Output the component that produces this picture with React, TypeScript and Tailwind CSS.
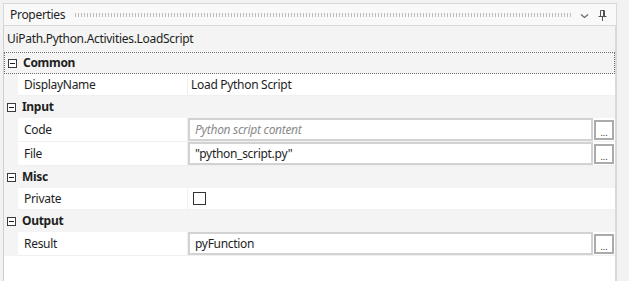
import React from "react";

const font = "font-['Noto_Sans',sans-serif] tracking-[-0.3px]";

const Toggle = () => (
  <span className="w-[9px] h-[9px] border border-[#3c3c3c] bg-white flex items-center justify-center shrink-0">
    <span className="w-[5px] h-px bg-[#1e1e1e]" />
  </span>
);

const Header = ({ title, focus }: { title: string; focus?: boolean }) => (
  <div
    className={
      "h-[22px] flex items-center pl-[3px] " +
      (focus ? "border border-dotted border-[#707070]" : "")
    }
  >
    <Toggle />
    <span className="ml-[6px] font-bold text-[12px] text-[#1e1e1e]">{title}</span>
  </div>
);

const Row = ({
  label,
  children,
  tall,
}: {
  label: string;
  children?: React.ReactNode;
  tall?: boolean;
}) => (
  <div
    className={
      "flex ml-[14px] bg-white border-b border-[#f0f0f0] " + (tall ? "h-[24px]" : "h-[22px]")
    }
  >
    <div className="w-[170px] pl-[6px] flex items-center border-r border-[#f0f0f0] text-[12px] text-[#1e1e1e]">
      {label}
    </div>
    <div className="flex-1 flex items-start">{children}</div>
  </div>
);

const TextBox = ({ value, placeholder }: { value?: string; placeholder?: string }) => (
  <div className="flex items-start w-full">
    <div className="w-[405px] h-[23px] border-2 border-[#d2d2d4] bg-white flex items-center pl-[5px] text-[12px]">
      {value ? (
        <span className="text-[#1e1e1e]">{value}</span>
      ) : (
        <span className="italic text-[#8a8a8a]">{placeholder}</span>
      )}
    </div>
    <button className="ml-[1px] mt-[2px] w-[20px] h-[20px] border-2 border-[#ababab] bg-white flex items-end justify-center pb-[2px]">
      <span className="text-[9px] leading-[6px] tracking-[0px] text-[#333]">...</span>
    </button>
  </div>
);

export default function App() {
  return (
    <div className={"w-[629px] h-[281px] bg-[#f1f2f1] pt-[3px] pl-[3px] overflow-hidden " + font}>
      <div className="w-[614px]">
        {/* title bar */}
        <div className="h-[23px] bg-[#f9f9f9] border border-[#d9d9d9] flex items-center pl-[6px] pr-[8px]">
          <span className="text-[12px] text-[#1e1e1e]">Properties</span>
          <div className="flex-1 ml-[9px] mr-[9px] h-[4px] bg-[radial-gradient(circle,#bdbdbd_0.7px,transparent_0.9px)] bg-[length:3px_2px]" />
          <svg width="9" height="6" viewBox="0 0 9 6" className="mr-[9px] mt-[2px]">
            <path d="M1 1.5l3.5 3 3.5-3" fill="none" stroke="#6a6a6a" strokeWidth="1.3" />
          </svg>
          <svg width="9" height="12" viewBox="0 0 9 12" className="mr-[1px]">
            <path d="M2.5 1.5h4v6h-4z" fill="none" stroke="#555" strokeWidth="1" />
            <path d="M5 1.5h1.5v6H5z" fill="#555" />
            <path d="M0.5 7.5h8" stroke="#555" strokeWidth="1" />
            <path d="M4.5 8v4" stroke="#555" strokeWidth="1" />
          </svg>
        </div>
        {/* body */}
        <div className="h-[260px] bg-[#f3f4f3] border-l border-[#cfcfcf] border-r-2 border-r-[#d9d9d9] flex flex-col">
          <div className="h-[26px] flex items-center pl-[3px] text-[12px] text-[#1e1e1e]">
            UiPath.Python.Activities.LoadScript
          </div>
          <Header title="Common" focus />
          <Row label="DisplayName">
            <span className="pl-[3px] h-full flex items-center text-[12px] text-[#1e1e1e]">
              Load Python Script
            </span>
          </Row>
          <Header title="Input" />
          <Row label="Code" tall>
            <TextBox placeholder="Python script content" />
          </Row>
          <Row label="File" tall>
            <TextBox value={'"python_script.py"'} />
          </Row>
          <Header title="Misc" />
          <Row label="Private">
            <span className="h-full flex items-center pl-[5px]">
              <span className="w-[13px] h-[13px] border border-[#333] bg-white" />
            </span>
          </Row>
          <Header title="Output" />
          <Row label="Result" tall>
            <TextBox value="pyFunction" />
          </Row>
          <div className="flex-1 bg-white" />
        </div>
      </div>
    </div>
  );
}
